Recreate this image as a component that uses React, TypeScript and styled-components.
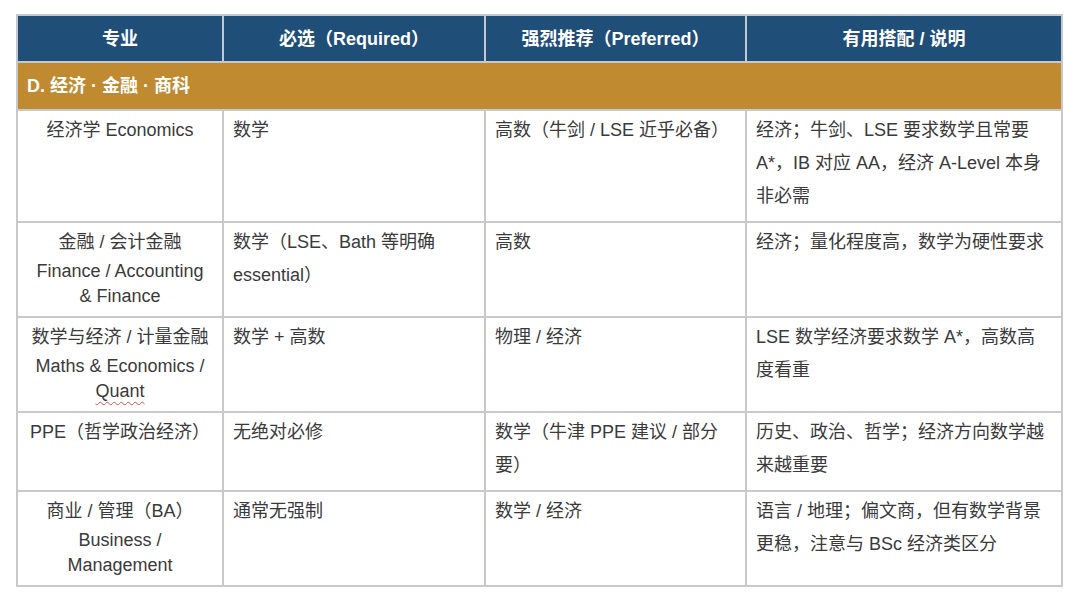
import React from 'react';
import styled, { createGlobalStyle } from 'styled-components';

type Row = {
  major: { zh: string; en?: string[]; squiggle?: string };
  required: string;
  preferred: string;
  notes: string;
};

const rows: Row[] = [
  {
    major: { zh: '经济学 Economics' },
    required: '数学',
    preferred: '高数（牛剑 / LSE 近乎必备）',
    notes: '经济；牛剑、LSE 要求数学且常要 A*，IB 对应 AA，经济 A-Level 本身非必需',
  },
  {
    major: { zh: '金融 / 会计金融', en: ['Finance / Accounting', '& Finance'] },
    required: '数学（LSE、Bath 等明确 essential）',
    preferred: '高数',
    notes: '经济；量化程度高，数学为硬性要求',
  },
  {
    major: { zh: '数学与经济 / 计量金融', en: ['Maths & Economics /'], squiggle: 'Quant' },
    required: '数学 + 高数',
    preferred: '物理 / 经济',
    notes: 'LSE 数学经济要求数学 A*，高数高度看重',
  },
  {
    major: { zh: 'PPE（哲学政治经济）' },
    required: '无绝对必修',
    preferred: '数学（牛津 PPE 建议 / 部分要）',
    notes: '历史、政治、哲学；经济方向数学越来越重要',
  },
  {
    major: { zh: '商业 / 管理（BA）', en: ['Business /', 'Management'] },
    required: '通常无强制',
    preferred: '数学 / 经济',
    notes: '语言 / 地理；偏文商，但有数学背景更稳，注意与 BSc 经济类区分',
  },
];

const App = () => {
  return (
    <>
      <GlobalStyle />
      <Page>
        <Table>
          <colgroup>
            <col style={{ width: 206 }} />
            <col style={{ width: 262 }} />
            <col style={{ width: 261 }} />
            <col style={{ width: 316 }} />
          </colgroup>
          <thead>
            <tr>
              <HeadCell>专业</HeadCell>
              <HeadCell>必选（Required）</HeadCell>
              <HeadCell>强烈推荐（Preferred）</HeadCell>
              <HeadCell>有用搭配 / 说明</HeadCell>
            </tr>
          </thead>
          <tbody>
            <tr>
              <SectionCell colSpan={4}>D. 经济 · 金融 · 商科</SectionCell>
            </tr>
            {rows.map((r) => (
              <tr key={r.major.zh}>
                <MajorCell>
                  <ZhLine>{r.major.zh}</ZhLine>
                  {r.major.en?.map((l) => (
                    <EnLine key={l}>{l}</EnLine>
                  ))}
                  {r.major.squiggle && (
                    <EnLine>
                      <Squiggle>{r.major.squiggle}</Squiggle>
                    </EnLine>
                  )}
                </MajorCell>
                <Cell>{r.required}</Cell>
                <Cell>{r.preferred}</Cell>
                <Cell>{r.notes}</Cell>
              </tr>
            ))}
          </tbody>
        </Table>
      </Page>
    </>
  );
};

export default App;

const GlobalStyle = createGlobalStyle`
  body {
    margin: 0;
    background: #ffffff;
    font-family: "Liberation Sans", "Noto Sans CJK SC", sans-serif;
    color: #3a3a3a;
  }
`;

const Page = styled.div`
  padding: 14px 0 0 16px;
`;

const Table = styled.table`
  border-collapse: collapse;
  table-layout: fixed;
  width: 1045px;
  border: 2px solid #c9c9c9;
  font-size: 18px;
`;

const HeadCell = styled.th`
  height: 41px;
  padding: 0 8px 4px 8px;
  background: #1f4e79;
  color: #ffffff;
  font-weight: bold;
  text-align: center;
  border: 2px solid #c4c9ce;
`;

const SectionCell = styled.td`
  height: 41px;
  padding: 0 9px 5px 9px;
  background: #c08a30;
  color: #ffffff;
  font-weight: bold;
  text-align: left;
  border: 2px solid #c9c9c9;
`;

const Cell = styled.td`
  vertical-align: top;
  padding: 3px 9px 8px 9px;
  line-height: 33px;
  border: 2px solid #c9c9c9;
  color: #3a3a3a;
`;

const MajorCell = styled(Cell)`
  text-align: center;
  padding-left: 6px;
  padding-right: 6px;
`;

const ZhLine = styled.div`
  line-height: 33px;
`;

const EnLine = styled.div`
  line-height: 24.5px;
`;

const Squiggle = styled.span`
  text-decoration: underline wavy #e0524f;
  text-decoration-thickness: 1px;
  text-underline-offset: 4px;
`;
